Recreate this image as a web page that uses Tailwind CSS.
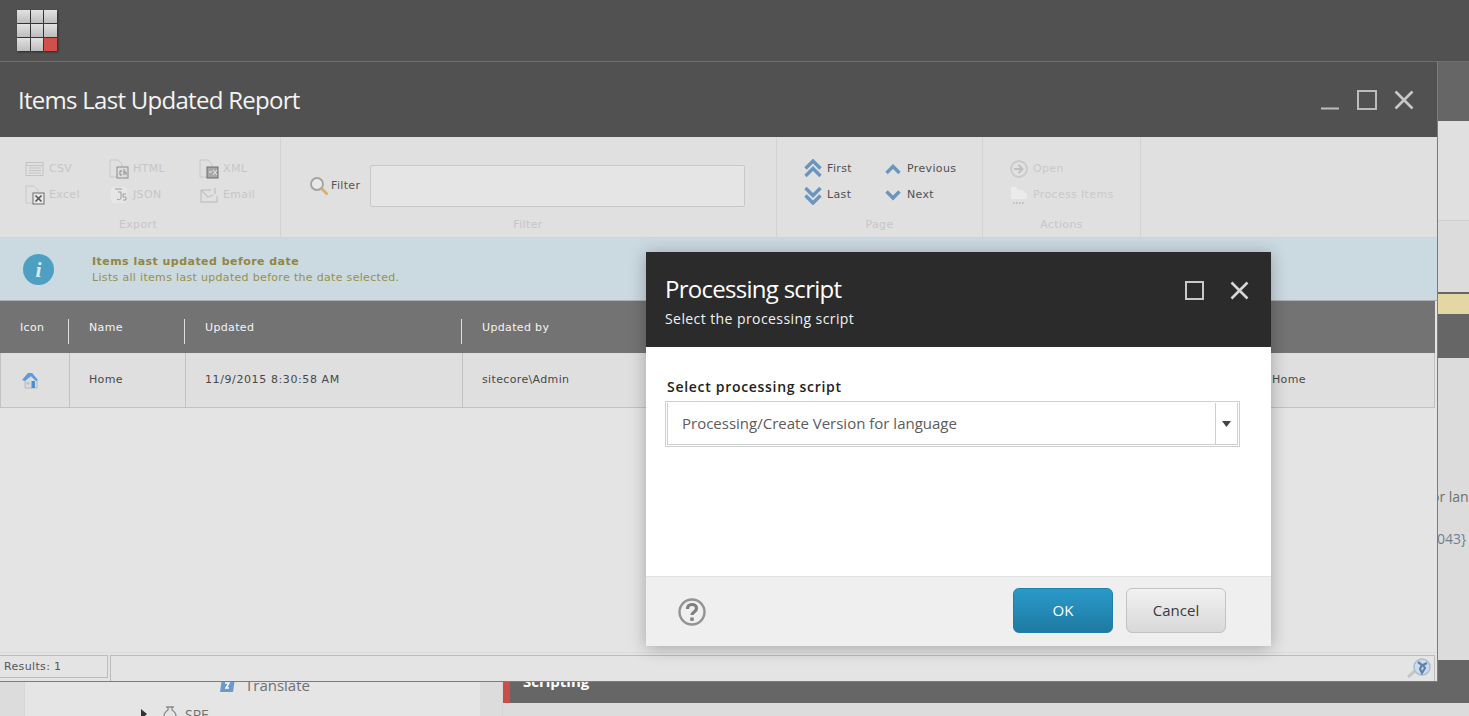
<!DOCTYPE html>
<html lang="en">
<head>
<meta charset="UTF-8" />
<title>Items Last Updated Report</title>
<script src="https://cdn.jsdelivr.net/npm/@tailwindcss/browser@4"></script>
</head>
<body class="relative w-[1469px] h-[716px] overflow-hidden bg-[#dcdcdc] font-['Open_Sans',sans-serif]">

<!-- Desktop behind the window -->
<div class="flex flex-col h-full">
  <div class="h-[61px] shrink-0 bg-[#515151] pl-[17px] pt-[10px]">
    <div class="grid grid-cols-3 grid-rows-[13px_13px_13px] gap-[1px] w-[40px] drop-shadow-[1px_1px_1px_rgba(0,0,0,0.5)]">
      <div class="bg-gradient-to-b from-[#e2e2e2] to-[#bdbdbd]"></div>
      <div class="bg-gradient-to-b from-[#e2e2e2] to-[#bdbdbd]"></div>
      <div class="bg-gradient-to-b from-[#e2e2e2] to-[#bdbdbd]"></div>
      <div class="bg-gradient-to-b from-[#e2e2e2] to-[#bdbdbd]"></div>
      <div class="bg-gradient-to-b from-[#e2e2e2] to-[#bdbdbd]"></div>
      <div class="bg-gradient-to-b from-[#e2e2e2] to-[#bdbdbd]"></div>
      <div class="bg-gradient-to-b from-[#e2e2e2] to-[#bdbdbd]"></div>
      <div class="bg-gradient-to-b from-[#e2e2e2] to-[#bdbdbd]"></div>
      <div class="bg-[#d2504a]"></div>
    </div>
  </div>
  <div class="h-px shrink-0 bg-[#6f6f6f]"></div>
  <div class="flex flex-1 min-h-0">
    <div class="w-[25px] border-r border-[#d6d6d6]"></div>
    <!-- Content tree -->
    <div class="w-[455px] bg-[#e5e5e5] pt-[615px] text-[15px] text-[#707070]">
      <div class="flex items-center h-[16px] pl-[195px] gap-[10px]">
        <svg class="w-[15px] h-[14px]" viewBox="0 0 15 14"><path d="M2 0h13l-2 14H0z" fill="#6b9ac9"/><path d="M5 5h4l-3 5h3" fill="none" stroke="#fff" stroke-width="1.5"/></svg>
        <span>Translate</span>
      </div>
      <div class="flex items-center h-[16px] pl-[115px] mt-[13px]">
        <svg class="w-[8px] h-[10px] mr-[15px]" viewBox="0 0 8 10"><path d="M1 0l6 5-6 5z" fill="#333"/></svg>
        <svg class="w-[14px] h-[16px] mr-[8px]" viewBox="0 0 14 16"><path d="M3 1h8M5 1v3C2 6 1 8 1 10c0 3 2 5 6 5s6-2 6-5c0-2-1-4-4-6V1" fill="none" stroke="#8a8a8a" stroke-width="1.3"/></svg>
        <span class="text-[14px]">SPE</span>
      </div>
    </div>
    <div class="w-[23px] border-r border-[#d6d6d6]"></div>
    <!-- Content editor -->
    <div class="flex-1 flex flex-col min-w-0 overflow-hidden">
      <div class="h-[59px] shrink-0 bg-[#666666]"></div>
      <div class="h-[100px] shrink-0 bg-[#e0e0e0] border-b border-[#d0d0d0]"></div>
      <div class="h-[71px] shrink-0 bg-[#dcdcdc]"></div>
      <div class="h-[2px] shrink-0 bg-[#666666]"></div>
      <div class="h-[20px] shrink-0 bg-[#e3d7a3]"></div>
      <div class="h-[44px] shrink-0 bg-[#666666]"></div>
      <div class="h-[302px] shrink-0 bg-[#dcdcdc] pt-[129px] pl-[928px] text-[14px] leading-[20px] text-[#707070] whitespace-nowrap">
        <div>or lan</div>
        <div class="mt-[22px] ml-[6px] text-[#6f7f8f]">043}</div>
      </div>
      <div class="h-[43px] shrink-0 bg-[#666666] border-l-[7px] border-[#c9504a] pl-[13px] pt-[11px] text-[15px] leading-[20px] font-bold text-white">Scripting</div>
      <div class="flex-1"></div>
    </div>
  </div>
</div>

<!-- Report window -->
<div class="absolute left-0 top-[62px] w-[1438px] h-[620px] flex flex-col bg-[#e4e4e4] border-r border-b border-[#7c7c7c]">
  <div class="h-[75px] shrink-0 bg-[#515151] flex items-center justify-between pl-[18px] pr-[23px]">
    <h1 class="text-[24px] leading-[32px] tracking-[-0.72px] text-[#f4f4f4]">Items Last Updated Report</h1>
    <div class="flex items-center gap-[17px]">
      <svg class="w-[20px] h-[20px]" viewBox="0 0 20 20"><path d="M1 18.500h18" stroke="#bdbdbd" stroke-width="2"/></svg>
      <svg class="w-[20px] h-[20px]" viewBox="0 0 20 20"><rect x="1" y="1" width="18" height="18" fill="none" stroke="#bdbdbd" stroke-width="2"/></svg>
      <svg class="w-[20px] h-[20px]" viewBox="0 0 20 20"><path d="M1.500 1.500l17 17M18.500 1.500l-17 17" stroke="#c8c8c8" stroke-width="2.600"/></svg>
    </div>
  </div>

  <!-- Ribbon -->
  <div class="h-[101px] shrink-0 flex bg-[#e0e0e0] border-b border-[#d3d3d3] text-[11px] tracking-[0.35px] font-['DejaVu_Sans',sans-serif]">
    <div class="w-[281px] border-r border-[#d3d3d3] flex flex-col pt-[19px] text-[#c6c6c6]">
      <div class="grid grid-cols-[84px_90px_80px] auto-rows-[26px] pl-[24px]">
        <div class="flex items-center gap-[3px]"><svg class="w-[22px] h-[16px]" viewBox="0 0 22 16"><rect x="2" y="1.500" width="17" height="13" fill="none" stroke="#c4c4c4"/><path d="M2 4.500h17M5 7h12M5 9.500h12M5 12h12" stroke="#c4c4c4"/></svg>CSV</div>
        <div class="flex items-center gap-[3px]"><svg class="w-[22px] h-[20px]" viewBox="0 0 22 20"><path d="M2 1h8l4 4v13H2z" fill="none" stroke="#c8c8c8"/><rect x="9" y="8" width="11" height="11" fill="#dcdcdc" stroke="#8c8c8c"/><path d="M14 12h-2v4h2M16 10v6M16 13h2v3" fill="none" stroke="#8c8c8c"/></svg>HTML</div>
        <div class="flex items-center gap-[3px]"><svg class="w-[22px] h-[20px]" viewBox="0 0 22 20"><path d="M2 1h8l4 4v13H2z" fill="none" stroke="#c8c8c8"/><rect x="9" y="8" width="11" height="11" fill="#a8a8a8" stroke="#6c6c6c"/><path d="M11 13h3M15 11l4 5M19 11l-4 5" stroke="#e8e8e8"/></svg>XML</div>
        <div class="flex items-center gap-[3px]"><svg class="w-[22px] h-[20px]" viewBox="0 0 22 20"><path d="M2 1h8l4 4v13H2z" fill="none" stroke="#c8c8c8"/><rect x="9" y="8" width="11" height="11" fill="#e8e8e8" stroke="#6c6c6c"/><path d="M11.500 10.500l6 6M17.500 10.500l-6 6" stroke="#555" stroke-width="1.600"/></svg>Excel</div>
        <div class="flex items-center gap-[3px]"><svg class="w-[22px] h-[18px]" viewBox="0 0 22 18"><rect x="3" y="1" width="16" height="16" rx="3" fill="#e6e6e6"/><path d="M7 3h7M10 6h3v6c0 2-3 2-4 1M18 8h-3v3h3v3h-3" fill="none" stroke="#9c9c9c"/></svg>JSON</div>
        <div class="flex items-center gap-[3px]"><svg class="w-[22px] h-[16px]" viewBox="0 0 22 16"><path d="M3 3h10M3 3v12h16V9M3 3l7 7 5-2" fill="none" stroke="#c4c4c4" stroke-width="1.300"/><path d="M17 1v6" stroke="#c4c4c4" stroke-width="1.500"/></svg>Email</div>
      </div>
      <div class="mt-auto pb-[4px] text-center pr-[4px]">Export</div>
    </div>

    <div class="w-[496px] border-r border-[#d3d3d3] flex flex-col pt-[28px] pl-[28px] pr-[31px]">
      <div class="flex items-center h-[42px]">
        <svg class="w-[20px] h-[20px]" viewBox="0 0 20 20"><circle cx="8" cy="8" r="6" fill="#e8e8e8" stroke="#a2a2a2" stroke-width="1.800"/><path d="M12.500 12.500l6 6" stroke="#d9ae6c" stroke-width="2.500"/></svg>
        <span class="ml-[2px] w-[39px] text-[#555555]">Filter</span>
        <input type="text" class="flex-1 h-[42px] bg-[#e5e5e5] border border-[#c8c8c8] rounded-[2px]" />
      </div>
      <div class="mt-auto pb-[4px] text-center pl-[2px] text-[#c6c6c6]">Filter</div>
    </div>

    <div class="w-[206px] border-r border-[#d3d3d3] flex flex-col pt-[19px] text-[#505050]">
      <div class="grid grid-cols-[80px_100px] auto-rows-[26px] pl-[26px]">
        <div class="flex items-center gap-[4px]"><svg class="w-[20px] h-[20px]" viewBox="0 0 20 20"><path d="M2.500 9.500L10 2l7.500 7.500M2.500 17L10 9.500l7.500 7.500" fill="none" stroke="#6c95bd" stroke-width="3.400"/></svg>First</div>
        <div class="flex items-center gap-[4px]"><svg class="w-[20px] h-[20px]" viewBox="0 0 20 20"><path d="M3.500 14L10 7.500l6.500 6.500" fill="none" stroke="#6c95bd" stroke-width="3.400"/></svg>Previous</div>
        <div class="flex items-center gap-[4px]"><svg class="w-[20px] h-[20px]" viewBox="0 0 20 20"><path d="M2.500 3L10 10.500 17.500 3M2.500 10.500L10 18l7.500-7.500" fill="none" stroke="#6c95bd" stroke-width="3.400"/></svg>Last</div>
        <div class="flex items-center gap-[4px]"><svg class="w-[20px] h-[20px]" viewBox="0 0 20 20"><path d="M3.500 6.500L10 13l6.500-6.500" fill="none" stroke="#6c95bd" stroke-width="3.400"/></svg>Next</div>
      </div>
      <div class="mt-auto pb-[4px] text-center text-[#c6c6c6]">Page</div>
    </div>

    <div class="w-[158px] border-r border-[#d3d3d3] flex flex-col pt-[19px] text-[#c9c9c9]">
      <div class="grid auto-rows-[26px] pl-[26px]">
        <div class="flex items-center gap-[4px]"><svg class="w-[20px] h-[20px]" viewBox="0 0 20 20"><circle cx="10" cy="10" r="8" fill="none" stroke="#cacaca" stroke-width="1.800"/><path d="M5 10h8M9.500 6l4 4-4 4" fill="none" stroke="#c0c0c0" stroke-width="2"/></svg>Open</div>
        <div class="flex items-center gap-[4px]"><svg class="w-[20px] h-[22px]" viewBox="0 0 20 22"><path d="M2 15V3h5l2 3h5l4 4v5z" fill="#ebebeb"/><path d="M4 19h1.500M7 19h1.500M10 19h1.500M13 19h1.500" stroke="#bcbcbc" stroke-width="2"/></svg>Process Items</div>
      </div>
      <div class="mt-auto pb-[4px] text-center text-[#c6c6c6]">Actions</div>
    </div>
    <div class="flex-1"></div>
  </div>

  <!-- Report description -->
  <div class="h-[63px] shrink-0 bg-[#cbd9e0] border-b border-[#a9b0b4] flex items-center pl-[23px] font-['DejaVu_Sans',sans-serif]">
    <div class="w-[31px] h-[31px] rounded-full bg-[#4f9fc3] flex items-center justify-center text-[22px] font-bold italic font-['Liberation_Serif',serif] text-[#d8eaf2]">i</div>
    <div class="ml-[38px] mt-[1px] text-[11px] leading-[16px] tracking-[0.32px] text-[#98904f]">
      <div class="font-bold tracking-[0.46px] text-[#928543]">Items last updated before date</div>
      <div>Lists all items last updated before the date selected.</div>
    </div>
  </div>

  <!-- Results table -->
  <div class="pr-[2px] text-[11px] tracking-[0.35px] font-['DejaVu_Sans',sans-serif]">
    <div class="h-[52px] pt-[8px] bg-[#737373] text-[#f4f4f4] grid grid-cols-[69px_116px_277px_790px_1fr] items-center">
      <div class="h-[25px] leading-[18px] pl-[20px] border-r border-[#dedede]">Icon</div>
      <div class="h-[25px] leading-[18px] pl-[20px] border-r border-[#dedede]">Name</div>
      <div class="h-[25px] leading-[18px] pl-[20px] border-r border-[#dedede]">Updated</div>
      <div class="h-[25px] leading-[18px] pl-[20px]">Updated by</div>
      <div></div>
    </div>
    <div class="h-[55px] bg-[#dfdfdf] text-[#484848] grid grid-cols-[69px_116px_277px_790px_1fr] items-center border-l border-r border-b border-[#c2c2c2]">
      <div class="h-full flex items-center pl-[20px] border-r border-[#c2c2c2]">
        <svg class="w-[18px] h-[18px]" viewBox="0 0 18 18"><path d="M4 9l6-4 6 5v7H4z" fill="#d9dde1" stroke="#a9adb2" stroke-width="0.800"/><path d="M1 9l6-7h4l6 7-2 1-5-5-6 5z" fill="#5c9bdc"/><path d="M7 2h4l4 6-5-4-6 4z" fill="#5c9bdc"/><rect x="10.500" y="10" width="3.500" height="7" fill="#4a8fd0"/><rect x="5.500" y="11" width="3" height="2.500" fill="#b8c0c8"/></svg>
      </div>
      <div class="h-full flex items-center pl-[19px] border-r border-[#c2c2c2]">Home</div>
      <div class="h-full flex items-center pl-[19px] tracking-[0.6px] border-r border-[#c2c2c2]">11/9/2015 8:30:58 AM</div>
      <div class="h-full flex items-center pl-[19px]">sitecore\Admin</div>
      <div class="h-full flex items-center pl-[19px]">Home</div>
    </div>
  </div>

  <!-- Status bar -->
  <div class="mt-auto border-t border-[#dcdcdc] pt-[2px] h-[29px] flex text-[11px] tracking-[0.35px] text-[#555555] font-['DejaVu_Sans',sans-serif]">
    <div class="w-[108px] h-[23px] border border-l-0 border-[#bcbcbc] pl-[4px] leading-[21px]">Results: 1</div>
    <div class="ml-[2px] flex-1 border-l border-t border-r border-[#bcbcbc] mr-[2px] flex justify-end pr-[2px] pt-[1px]">
      <svg class="w-[26px] h-[22px]" viewBox="0 0 26 22"><path d="M10 13l-8 7" stroke="#c6c6c6" stroke-width="3"/><circle cx="16" cy="10" r="8" fill="#cfdce8" stroke="#a8bdd2" stroke-width="1.500"/><path d="M12 5l4 3-2 4 2 4 3-5-2-3 4-2" fill="none" stroke="#5c82ad" stroke-width="2.200"/></svg>
    </div>
  </div>
</div>

<!-- Processing script dialog -->
<div class="absolute left-[646px] top-[252px] w-[625px] h-[394px] flex flex-col bg-white shadow-[0_2px_16px_rgba(0,0,0,0.28)]">
  <div class="h-[95px] shrink-0 bg-[#2b2b2b] flex justify-between pl-[19px] pr-[22px]">
    <div class="pt-[21px]">
      <h2 class="text-[24px] leading-[32px] tracking-[-0.72px] text-white">Processing script</h2>
      <p class="text-[14px] leading-[20px] mt-[4px] tracking-[0.42px] text-[#f2f2f2]">Select the processing script</p>
    </div>
    <div class="flex gap-[26px] pt-[29px]">
      <svg class="w-[19px] h-[19px]" viewBox="0 0 19 19"><rect x="1" y="1" width="17" height="17" fill="none" stroke="#c8c8c8" stroke-width="2"/></svg>
      <svg class="w-[19px] h-[19px]" viewBox="0 0 19 19"><path d="M1.500 1.500l16 16M17.500 1.500l-16 16" stroke="#d6d6d6" stroke-width="2.600"/></svg>
    </div>
  </div>
  <div class="flex-1 pt-[30px] pl-[19px] pr-[31px]">
    <label class="block pl-[2px] text-[14px] leading-[20px] tracking-[0.7px] font-semibold text-[#222222]">Select processing script</label>
    <div class="mt-[4px] h-[46px] border border-[#cfcfcf] p-px">
      <div class="h-full flex border border-[#cfcfcf] border-t-0">
        <div class="flex-1 flex items-center pl-[14px] text-[15px] tracking-[0px] text-[#5c5c5c]">Processing/Create Version for language</div>
        <div class="w-[22px] border-l border-[#cfcfcf] flex items-center justify-center">
          <svg class="w-[9px] h-[6px]" viewBox="0 0 9 6"><path d="M0 0h9L4.500 6z" fill="#444444"/></svg>
        </div>
      </div>
    </div>
  </div>
  <div class="h-[70px] shrink-0 bg-[#efefef] border-t border-[#e2e2e2] flex items-start pl-[32px] pr-[45px] pt-[11px]">
    <svg class="w-[28px] h-[28px] mt-[10px]" viewBox="0 0 28 28"><circle cx="14" cy="14" r="12.500" fill="none" stroke="#939393" stroke-width="2.400"/><path d="M9.500 11c0-3 2-4.500 4.500-4.500s4.500 1.500 4.500 4c0 3.500-4.500 3.500-4.500 6.500" fill="none" stroke="#7f7f7f" stroke-width="3.200"/><rect x="12.300" y="19.500" width="3.400" height="3.400" fill="#7f7f7f"/></svg>
    <button class="ml-auto w-[100px] h-[45px] rounded-[6px] border border-[#1e7fa8] bg-gradient-to-b from-[#2a9aca] to-[#1e7aa2] text-[15px] text-white">OK</button>
    <button class="ml-[13px] w-[100px] h-[45px] rounded-[6px] border border-[#c2c2c2] bg-gradient-to-b from-[#f2f2f2] to-[#d8d8d8] text-[15px] text-[#3a3a3a]">Cancel</button>
  </div>
</div>

</body>
</html>
